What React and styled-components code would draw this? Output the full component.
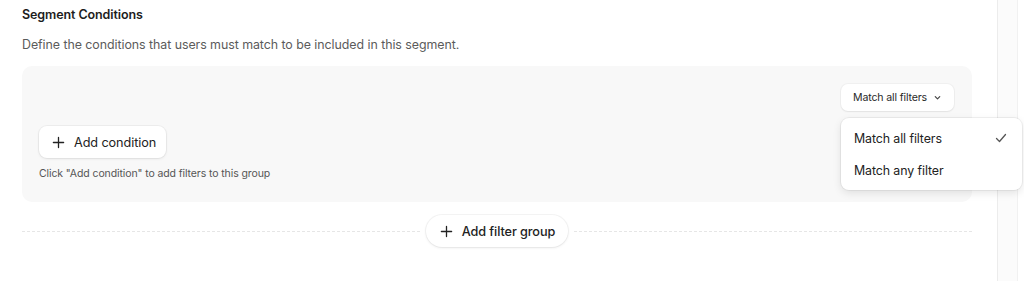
import React from 'react'
import styled, { createGlobalStyle } from 'styled-components'

const GlobalStyle = createGlobalStyle`
  html, body {
    margin: 0;
    padding: 0;
    background: #fff;
    font-family: Inter, "Noto Sans", sans-serif;
    color: #1f1f1f;
  }
`

const Page = styled.div`
  display: flex;
  width: 1024px;
  height: 281px;
  overflow: hidden;
`

const Main = styled.main`
  width: 998px;
  border-right: 1px solid #ececec;
  padding: 6px 25px 0 22px;
  box-sizing: border-box;
`

const Gutter = styled.div`
  flex: 1;
  background: #fbfbfb;
  border-right: 1px solid #f1f1f1;
  margin-right: 6px;
`

const Title = styled.h2`
  margin: 0;
  font-size: 12.5px;
  line-height: 18px;
  font-weight: 600;
  letter-spacing: -0.1px;
  color: #1d1d1d;
`

const Description = styled.p`
  margin: 12px 0 0;
  font-size: 12.4px;
  line-height: 18px;
  letter-spacing: -0.05px;
  color: #5b5b5b;
`

const Group = styled.section`
  margin-top: 12px;
  background: #f8f8f8;
  border-radius: 10px;
  padding: 18px 18px 20px 17px;
  display: flex;
  flex-direction: column;
`

const GroupHeader = styled.div`
  display: flex;
  justify-content: flex-end;
`

const MatchWrap = styled.div`
  position: relative;
`

const MatchButton = styled.button`
  display: flex;
  align-items: center;
  gap: 6px;
  height: 27px;
  padding: 0 12px 0 12px;
  background: #fff;
  border: none;
  border-radius: 7px;
  box-shadow: 0 0 0 1px rgba(0, 0, 0, 0.03), 0 1px 2px rgba(0, 0, 0, 0.06);
  font-family: inherit;
  font-size: 10.6px;
  color: #2a2a2a;
  letter-spacing: -0.15px;
`

const Menu = styled.ul`
  position: absolute;
  top: 34px;
  left: 0;
  width: 181px;
  margin: 0;
  padding: 4px;
  box-sizing: border-box;
  list-style: none;
  background: #fff;
  border-radius: 8px;
  box-shadow: 0 0 0 1px rgba(0, 0, 0, 0.05), 0 3px 8px rgba(0, 0, 0, 0.1);
  z-index: 2;
`

const MenuItem = styled.li`
  display: flex;
  align-items: center;
  justify-content: space-between;
  height: 32px;
  padding: 0 10px 0 9px;
  font-size: 12.4px;
  letter-spacing: -0.1px;
  color: #222;
`

const PillButton = styled.button`
  display: inline-flex;
  align-items: center;
  gap: 9px;
  align-self: flex-start;
  height: 32px;
  padding: 0 ${p => (p.$round ? '13px' : '10px')} 0 ${p => (p.$round ? '14px' : '13px')};
  background: #fff;
  border: none;
  border-radius: ${p => (p.$round ? '16px' : '8px')};
  box-shadow: 0 0 0 1px rgba(0, 0, 0, 0.04), 0 1px 3px rgba(0, 0, 0, 0.08);
  font-family: inherit;
  font-size: 12.7px;
  letter-spacing: -0.1px;
  font-weight: ${p => (p.$round ? 500 : 400)};
  color: #222;
`

const AddConditionRow = styled.div`
  margin-top: 15px;
  display: flex;
`

const Hint = styled.p`
  margin: 8px 0 0;
  font-size: 10.5px;
  line-height: 16px;
  letter-spacing: -0.1px;
  color: #555;
`

const Divider = styled.div`
  margin-top: 13px;
  display: flex;
  align-items: center;
  gap: 6px;

  &::before,
  &::after {
    content: '';
    flex: 1;
    border-top: 1px dashed #e6e6e6;
  }
`

const Plus = () => (
  <svg width="13" height="13" viewBox="0 0 14 14" fill="none" stroke="#222" strokeWidth="1.4" strokeLinecap="round">
    <path d="M7 1.5v11M1.5 7h11" />
  </svg>
)

const Chevron = () => (
  <svg width="9" height="9" viewBox="0 0 10 10" fill="none" stroke="#444" strokeWidth="1.3" strokeLinecap="round" strokeLinejoin="round">
    <path d="M2.5 4l2.5 2.5L7.5 4" />
  </svg>
)

const Check = () => (
  <svg width="14" height="14" viewBox="0 0 14 14" fill="none" stroke="#555" strokeWidth="1.3" strokeLinecap="round" strokeLinejoin="round">
    <path d="M2.5 7.5l3 3 6-7" />
  </svg>
)

export default function App () {
  return (
    <Page>
      <GlobalStyle />
      <Main>
        <Title>Segment Conditions</Title>
        <Description>Define the conditions that users must match to be included in this segment.</Description>
        <Group>
          <GroupHeader>
            <MatchWrap>
              <MatchButton>
                Match all filters
                <Chevron />
              </MatchButton>
              <Menu>
                <MenuItem>
                  Match all filters
                  <Check />
                </MenuItem>
                <MenuItem>Match any filter</MenuItem>
              </Menu>
            </MatchWrap>
          </GroupHeader>
          <AddConditionRow>
            <PillButton>
              <Plus />
              Add condition
            </PillButton>
          </AddConditionRow>
          <Hint>Click "Add condition" to add filters to this group</Hint>
        </Group>
        <Divider>
          <PillButton $round>
            <Plus />
            Add filter group
          </PillButton>
        </Divider>
      </Main>
      <Gutter />
    </Page>
  )
}
